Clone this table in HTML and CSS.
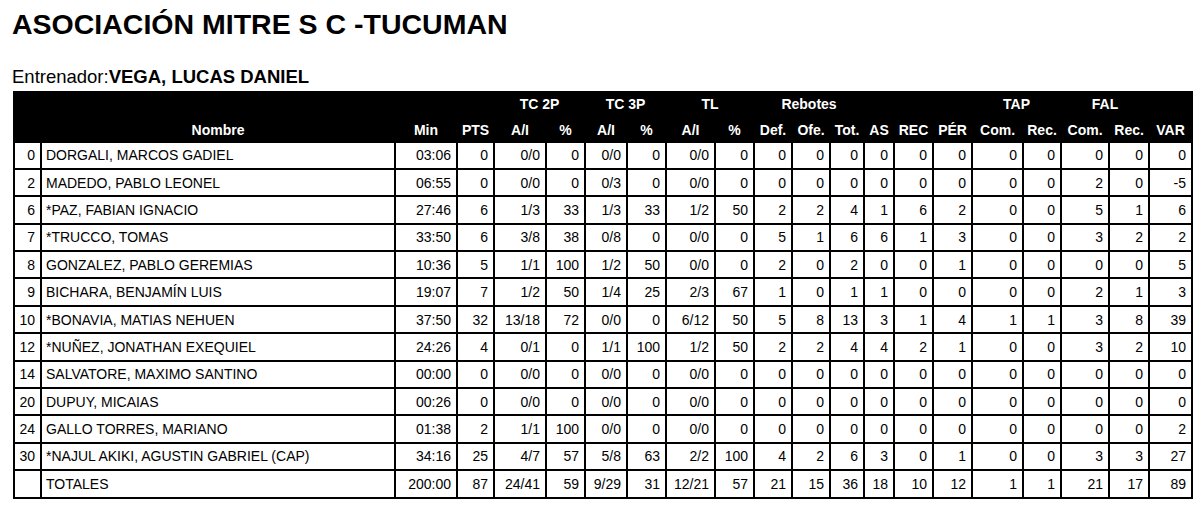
FILE: index.html
```html
<!DOCTYPE html>
<html lang="es">
<head>
<meta charset="utf-8">
<title>Asociación Mitre S C - Tucuman</title>
<link rel="stylesheet" href="styles.css">
</head>
<body>
<div class="page">
  <h1 class="title">ASOCIACIÓN MITRE S C -TUCUMAN</h1>
  <p class="coach">Entrenador:<b>VEGA, LUCAS DANIEL</b></p>
  <table class="stats">
    <colgroup>
      <col class="w27"><col class="w354"><col class="w62"><col class="w37">
      <col class="w52"><col class="w39"><col class="w42"><col class="w39">
      <col class="w49"><col class="w39">
      <col class="w38"><col class="w38"><col class="w34">
      <col class="w30"><col class="w39"><col class="w39">
      <col class="w51"><col class="w38"><col class="w48"><col class="w40"><col class="w43">
    </colgroup>
    <thead>
      <tr class="h1">
        <th colspan="4"></th>
        <th colspan="2">TC 2P</th>
        <th colspan="2">TC 3P</th>
        <th colspan="2">TL</th>
        <th colspan="3">Rebotes</th>
        <th colspan="3"></th>
        <th colspan="2">TAP</th>
        <th colspan="2">FAL</th>
        <th></th>
      </tr>
      <tr class="h2">
        <th></th><th>Nombre</th><th>Min</th><th>PTS</th>
        <th>A/I</th><th>%</th><th>A/I</th><th>%</th><th>A/I</th><th>%</th>
        <th>Def.</th><th>Ofe.</th><th>Tot.</th><th>AS</th><th>REC</th><th>PÉR</th>
        <th>Com.</th><th>Rec.</th><th>Com.</th><th>Rec.</th><th>VAR</th>
      </tr>
    </thead>
    <tbody>
      <tr><td>0</td><td class="name">DORGALI, MARCOS GADIEL</td><td>03:06</td><td>0</td><td>0/0</td><td>0</td><td>0/0</td><td>0</td><td>0/0</td><td>0</td><td>0</td><td>0</td><td>0</td><td>0</td><td>0</td><td>0</td><td>0</td><td>0</td><td>0</td><td>0</td><td>0</td></tr>
      <tr><td>2</td><td class="name">MADEDO, PABLO LEONEL</td><td>06:55</td><td>0</td><td>0/0</td><td>0</td><td>0/3</td><td>0</td><td>0/0</td><td>0</td><td>0</td><td>0</td><td>0</td><td>0</td><td>0</td><td>0</td><td>0</td><td>0</td><td>2</td><td>0</td><td>-5</td></tr>
      <tr><td>6</td><td class="name">*PAZ, FABIAN IGNACIO</td><td>27:46</td><td>6</td><td>1/3</td><td>33</td><td>1/3</td><td>33</td><td>1/2</td><td>50</td><td>2</td><td>2</td><td>4</td><td>1</td><td>6</td><td>2</td><td>0</td><td>0</td><td>5</td><td>1</td><td>6</td></tr>
      <tr><td>7</td><td class="name">*TRUCCO, TOMAS</td><td>33:50</td><td>6</td><td>3/8</td><td>38</td><td>0/8</td><td>0</td><td>0/0</td><td>0</td><td>5</td><td>1</td><td>6</td><td>6</td><td>1</td><td>3</td><td>0</td><td>0</td><td>3</td><td>2</td><td>2</td></tr>
      <tr><td>8</td><td class="name">GONZALEZ, PABLO GEREMIAS</td><td>10:36</td><td>5</td><td>1/1</td><td>100</td><td>1/2</td><td>50</td><td>0/0</td><td>0</td><td>2</td><td>0</td><td>2</td><td>0</td><td>0</td><td>1</td><td>0</td><td>0</td><td>0</td><td>0</td><td>5</td></tr>
      <tr><td>9</td><td class="name">BICHARA, BENJAMÍN LUIS</td><td>19:07</td><td>7</td><td>1/2</td><td>50</td><td>1/4</td><td>25</td><td>2/3</td><td>67</td><td>1</td><td>0</td><td>1</td><td>1</td><td>0</td><td>0</td><td>0</td><td>0</td><td>2</td><td>1</td><td>3</td></tr>
      <tr><td>10</td><td class="name">*BONAVIA, MATIAS NEHUEN</td><td>37:50</td><td>32</td><td>13/18</td><td>72</td><td>0/0</td><td>0</td><td>6/12</td><td>50</td><td>5</td><td>8</td><td>13</td><td>3</td><td>1</td><td>4</td><td>1</td><td>1</td><td>3</td><td>8</td><td>39</td></tr>
      <tr><td>12</td><td class="name">*NUÑEZ, JONATHAN EXEQUIEL</td><td>24:26</td><td>4</td><td>0/1</td><td>0</td><td>1/1</td><td>100</td><td>1/2</td><td>50</td><td>2</td><td>2</td><td>4</td><td>4</td><td>2</td><td>1</td><td>0</td><td>0</td><td>3</td><td>2</td><td>10</td></tr>
      <tr><td>14</td><td class="name">SALVATORE, MAXIMO SANTINO</td><td>00:00</td><td>0</td><td>0/0</td><td>0</td><td>0/0</td><td>0</td><td>0/0</td><td>0</td><td>0</td><td>0</td><td>0</td><td>0</td><td>0</td><td>0</td><td>0</td><td>0</td><td>0</td><td>0</td><td>0</td></tr>
      <tr><td>20</td><td class="name">DUPUY, MICAIAS</td><td>00:26</td><td>0</td><td>0/0</td><td>0</td><td>0/0</td><td>0</td><td>0/0</td><td>0</td><td>0</td><td>0</td><td>0</td><td>0</td><td>0</td><td>0</td><td>0</td><td>0</td><td>0</td><td>0</td><td>0</td></tr>
      <tr><td>24</td><td class="name">GALLO TORRES, MARIANO</td><td>01:38</td><td>2</td><td>1/1</td><td>100</td><td>0/0</td><td>0</td><td>0/0</td><td>0</td><td>0</td><td>0</td><td>0</td><td>0</td><td>0</td><td>0</td><td>0</td><td>0</td><td>0</td><td>0</td><td>2</td></tr>
      <tr><td>30</td><td class="name">*NAJUL AKIKI, AGUSTIN GABRIEL (CAP)</td><td>34:16</td><td>25</td><td>4/7</td><td>57</td><td>5/8</td><td>63</td><td>2/2</td><td>100</td><td>4</td><td>2</td><td>6</td><td>3</td><td>0</td><td>1</td><td>0</td><td>0</td><td>3</td><td>3</td><td>27</td></tr>
      <tr><td></td><td class="name">TOTALES</td><td>200:00</td><td>87</td><td>24/41</td><td>59</td><td>9/29</td><td>31</td><td>12/21</td><td>57</td><td>21</td><td>15</td><td>36</td><td>18</td><td>10</td><td>12</td><td>1</td><td>1</td><td>21</td><td>17</td><td>89</td></tr>
    </tbody>
  </table>
</div>
</body>
</html>
```
FILE: styles.css
```css
html, body {
  margin: 0;
  background: #fff;
}
body {
  font-family: "Liberation Sans", Arial, sans-serif;
  color: #000;
}
.page {
  padding: 10px 0 0 12px;
}
.title {
  margin: 0;
  font-size: 28.5px;
  line-height: 29px;
  font-weight: bold;
}
.coach {
  margin: 29px 0 0;
  font-size: 18.5px;
  line-height: 1;
}
.coach b {
  font-weight: bold;
}
.stats {
  margin: 4px 0 0 1px;
  border-collapse: collapse;
  table-layout: fixed;
  width: 1180px;
  font-size: 14px;
}
.stats th,
.stats td {
  border: 2px solid #000;
  padding: 0 5px 0 2px;
  white-space: nowrap;
  overflow: hidden;
}
.stats thead th {
  background: #000;
  color: #fff;
  font-weight: bold;
  text-align: center;
  padding: 0;
}
.stats .h1 { height: 25px; }
.stats .h2 { height: 25px; }
.stats .h2 th { padding-top: 2px; }
.stats tbody tr { height: 27.4px; }
.stats tbody td { text-align: right; }
.stats tbody td.name {
  text-align: left;
  padding-left: 4px;
}

.w27 { width: 27px; }
.w30 { width: 30px; }
.w34 { width: 34px; }
.w37 { width: 37px; }
.w38 { width: 38px; }
.w39 { width: 39px; }
.w40 { width: 40px; }
.w42 { width: 42px; }
.w43 { width: 43px; }
.w48 { width: 48px; }
.w49 { width: 49px; }
.w51 { width: 51px; }
.w52 { width: 52px; }
.w62 { width: 62px; }
.w354 { width: 354px; }
```
